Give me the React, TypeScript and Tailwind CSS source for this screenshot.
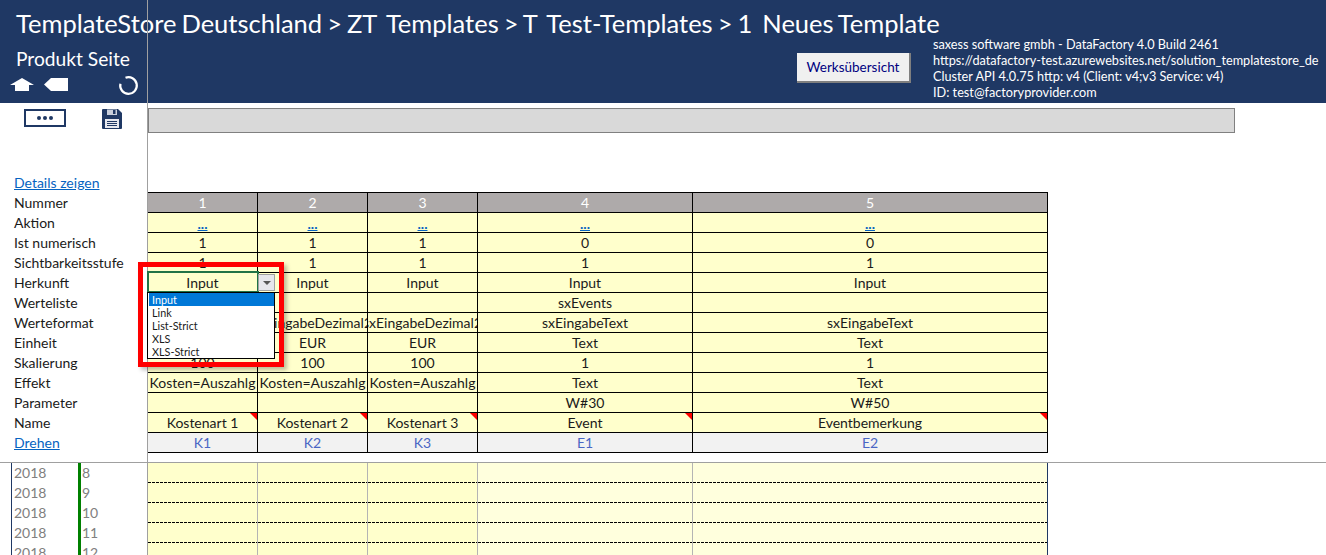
import React from 'react';

const labels = ['Nummer', 'Aktion', 'Ist numerisch', 'Sichtbarkeitsstufe', 'Herkunft', 'Werteliste', 'Werteformat', 'Einheit', 'Skalierung', 'Effekt', 'Parameter', 'Name'];

const columns = [
  { width: 'w-[110px]', values: ['1', '...', '1', '1', 'Input', '', 'sxEingabeDezimal2', 'EUR', '100', 'Kosten=Auszahlg', '', 'Kostenart 1', 'K1'] },
  { width: 'w-[110px]', values: ['2', '...', '1', '1', 'Input', '', 'sxEingabeDezimal2', 'EUR', '100', 'Kosten=Auszahlg', '', 'Kostenart 2', 'K2'] },
  { width: 'w-[110px]', values: ['3', '...', '1', '1', 'Input', '', 'sxEingabeDezimal2', 'EUR', '100', 'Kosten=Auszahlg', '', 'Kostenart 3', 'K3'] },
  { width: 'w-[215px]', values: ['4', '...', '0', '1', 'Input', 'sxEvents', 'sxEingabeText', 'Text', '1', 'Text', 'W#30', 'Event', 'E1'] },
  { width: 'w-[355px]', values: ['5', '...', '0', '1', 'Input', '', 'sxEingabeText', 'Text', '1', 'Text', 'W#50', 'Eventbemerkung', 'E2'] },
];

const weeks = ['8', '9', '10', '11', '12'];
const options = ['Input', 'Link', 'List-Strict', 'XLS', 'XLS-Strict'];

function HeaderIcons() {
  return (
    <div className="flex items-center h-[20px] ml-[10px]">
      <svg width="24" height="14" viewBox="0 0 24 14" className="mr-[10px]">
        <path d="M12 0 L24 7 L19 7 L19 13 L5 13 L5 7 L0 7 Z" fill="#fff" />
      </svg>
      <svg width="25" height="14" viewBox="0 0 25 14" className="mr-[49px]">
        <path d="M7 0 L24 0 L24 13 L7 13 L0 6.5 Z" fill="#fff" />
      </svg>
      <svg width="21" height="21" viewBox="0 0 21 21">
        <path d="M7.5 2.8 A8.3 8.3 0 1 1 2.4 8.8" fill="none" stroke="#fff" strokeWidth="2.2" />
      </svg>
    </div>
  );
}

function Cell({ row, value }: { row: number; value: string }) {
  const isHead = row === 0;
  const isAction = row === 1;
  const isKey = row === 12;
  const bg = isHead ? 'bg-[#aeaaaa] text-white' : isKey ? 'bg-[#f2f2f2] text-[#4a66c4]' : 'bg-[#ffffcc] text-[#1a1a1a]';
  return (
    <div className={`relative h-[20px] border-b border-r border-black overflow-hidden whitespace-nowrap flex justify-center leading-[19px] ${bg}`}>
      {isAction ? <span className="text-[#0563c1] underline font-bold leading-[21px]">{value}</span> : value}
      {row === 11 && (
        <svg width="7" height="7" viewBox="0 0 7 7" className="absolute top-0 right-0">
          <path d="M0 0 L7 0 L7 7 Z" fill="#ff0000" />
        </svg>
      )}
    </div>
  );
}

export default function App() {
  return (
    <div className="relative w-[1326px] h-[555px] overflow-hidden bg-white font-['Lato','Open_Sans',sans-serif] text-[14px] text-[#1a1a1a]">
      {/* kopf */}
      <header className="flex h-[103px] bg-[#1f3864] text-white">
        <div className="w-[933px] shrink-0 pl-[16px]">
          <h1 className="text-[25.5px] leading-[30px] mt-[8px] whitespace-pre font-normal [word-spacing:-1.5px]">TemplateStore Deutschland &gt; ZT  Templates &gt; T  Test-Templates &gt; 1  Neues Template</h1>
          <div className="flex">
            <div className="w-[131px]">
              <p className="text-[19.2px] leading-[22px] mt-[10px] whitespace-nowrap">Produkt Seite</p>
              <div className="-ml-[16px] mt-[5px]">
                <HeaderIcons />
              </div>
            </div>
            <div className="flex-1 flex justify-end pr-[22px]">
              <button className="mt-[15px] w-[114px] h-[30px] bg-[#f0f0f0] text-[#00007f] text-[13.5px] border-b-2 border-r-2 border-[#7f7f7f]">Werksübersicht</button>
            </div>
          </div>
        </div>
        <div className="w-[393px] pt-[36px] text-[12.7px] leading-[16px] whitespace-nowrap">
          <p>saxess software gmbh - DataFactory 4.0 Build 2461</p>
          <p>https://datafactory-test.azurewebsites.net/solution_templatestore_de</p>
          <p>Cluster API 4.0.75 http: v4 (Client: v4;v3 Service: v4)</p>
          <p>ID: test@factoryprovider.com</p>
        </div>
      </header>

      <div className="flex h-[90px]">
        <div className="w-[148px] shrink-0 flex flex-col">
          <div className="flex pl-[24px] pt-[6px] items-start">
            <div className="w-[42px] h-[18px] border-2 border-[#1f3864] flex items-center justify-center gap-[2px]">
              <span className="w-[4px] h-[4px] rounded-full bg-[#1f3864]" />
              <span className="w-[4px] h-[4px] rounded-full bg-[#1f3864]" />
              <span className="w-[4px] h-[4px] rounded-full bg-[#1f3864]" />
            </div>
            <svg width="20" height="20" viewBox="0 0 20 20" className="ml-[36px]">
              <path d="M0 1 Q0 0 1 0 L16 0 L20 4 L20 19 Q20 20 19 20 L1 20 Q0 20 0 19 Z" fill="#1f3864" />
              <rect x="5" y="0.5" width="10" height="5.5" fill="#c9cfdc" />
              <rect x="11" y="1" width="2.5" height="4" fill="#1f3864" />
              <rect x="3" y="10" width="14" height="9" fill="#e6e8ef" />
              <path d="M5 12.5 H15 M5 14.5 H15 M5 16.5 H15" stroke="#1f3864" strokeWidth="1" />
            </svg>
          </div>
          <a className="mt-auto ml-[14px] h-[20px] leading-[19px] text-[#0563c1] underline">Details zeigen</a>
        </div>
        <div className="pt-[5px]">
          <div className="w-[1087px] h-[25px] bg-[#d9d9d9] border border-[#808080]" />
        </div>
      </div>

      {/* parameter tabelle */}
      <div className="flex">
        <div className="w-[147px] shrink-0 pl-[14px]">
          {labels.map((l) => (
            <div key={l} className="h-[20px] leading-[19px] whitespace-nowrap">{l}</div>
          ))}
          <a className="block h-[20px] leading-[19px] text-[#0563c1] underline">Drehen</a>
        </div>
        <div className="flex border-t border-l border-black h-[261px] -mt-[1px]">
          {columns.map((c, ci) => (
            <div key={ci} className={c.width}>
              {c.values.map((v, ri) => (
                <Cell key={ri} row={ri} value={v} />
              ))}
            </div>
          ))}
        </div>
      </div>

      {/* werte */}
      <div className="flex mt-[9px] border-t border-[#a0a0a0] h-[93px]">
        <div className="w-[148px] shrink-0 pl-[11px]">
          <div className="border-l border-[#1f3864] h-full">
            {weeks.map((w) => (
              <div key={w} className="flex h-[20px] leading-[19px] text-[#808080]">
                <span className="w-[66px] pl-[2px]">2018</span>
                <span className="border-l-[3px] border-[#008000] pl-[1px]">{w}</span>
              </div>
            ))}
          </div>
        </div>
        <div className="flex h-full">
          {columns.map((c, ci) => (
            <div key={ci} className={`${c.width} border-r ${ci === 4 ? 'border-[#1f3864]' : 'border-[#b4b4b4]'} ${ci < 3 ? 'bg-[#ffffcc]' : 'bg-[#ffffdd]'}`}>
              {weeks.map((w) => (
                <div key={w} className="h-[20px] flex items-end">
                  <div className="w-full h-px bg-[repeating-linear-gradient(90deg,#000_0_3px,transparent_3px_4px)]" />
                </div>
              ))}
            </div>
          ))}
        </div>
      </div>

      {/* trennlinie erste spalte */}
      <div className="absolute left-[147px] top-0 w-px h-[555px] bg-[#a0a0a0]" />

      {/* zelle mit auswahl */}
      <div className="absolute left-[147px] top-[271px] w-[112px] h-[22px] border-2 border-[#217346]" />
      <div className="absolute left-[258px] top-[274px] w-[17px] h-[17px] bg-[#e6e6eb] border border-[#a0a0a0] flex items-center justify-center">
        <span className="w-0 h-0 border-x-[4px] border-x-transparent border-t-[4px] border-t-[#555]" />
      </div>
      <div className="absolute left-[147px] top-[292px] w-[128px] h-[67px] bg-white border border-black pl-[1px] text-[10.8px] leading-[13px]">
        {options.map((o, i) => (
          <div key={o} className={i === 0 ? 'bg-[#0078d7] text-white w-[125px] pl-[3px]' : 'pl-[3px]'}>{o}</div>
        ))}
      </div>
      <div className="absolute left-[138px] top-[262px] w-[146px] h-[105px] border-[5px] border-[#ff0000] shadow-[3px_3px_4px_rgba(0,0,0,0.25)]" />
    </div>
  );
}
